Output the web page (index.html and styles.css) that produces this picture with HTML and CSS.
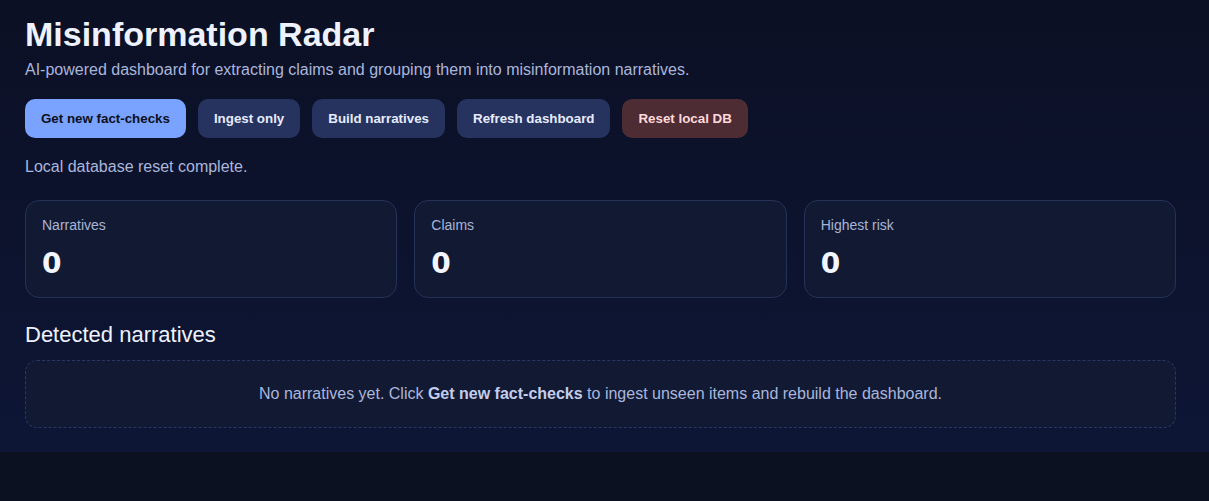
FILE: index.html
```html
<!DOCTYPE html>
<html lang="en">
<head>
<meta charset="utf-8">
<title>Misinformation Radar</title>
<link rel="stylesheet" href="styles.css">
</head>
<body>
<main class="app">
  <h1 class="title">Misinformation Radar</h1>
  <p class="subtitle">AI-powered dashboard for extracting claims and grouping them into misinformation narratives.</p>
  <div class="actions">
    <button class="btn btn-primary">Get new fact-checks</button>
    <button class="btn">Ingest only</button>
    <button class="btn">Build narratives</button>
    <button class="btn">Refresh dashboard</button>
    <button class="btn btn-danger">Reset local DB</button>
  </div>
  <p class="status">Local database reset complete.</p>
  <section class="stats">
    <div class="card">
      <div class="card-label">Narratives</div>
      <div class="card-value">0</div>
    </div>
    <div class="card">
      <div class="card-label">Claims</div>
      <div class="card-value">0</div>
    </div>
    <div class="card">
      <div class="card-label">Highest risk</div>
      <div class="card-value">0</div>
    </div>
  </section>
  <h2 class="section-title">Detected narratives</h2>
  <div class="empty">No narratives yet. Click <strong>Get new fact-checks</strong> to ingest unseen items and rebuild the dashboard.</div>
</main>
</body>
</html>
```
FILE: styles.css
```css
html, body {
  margin: 0;
  padding: 0;
}
body {
  background: #0b1120;
  font-family: "Liberation Sans", Arial, sans-serif;
  color: #e6ecff;
}
.app {
  background: linear-gradient(180deg, #0b1024 0%, #0e1636 100%);
  padding: 15px 33px 24px 25px;
}
.title {
  margin: 0;
  font-size: 34px;
  font-weight: 700;
  color: #eef2ff;
  line-height: 38px;
}
.subtitle {
  margin: 8px 0 0;
  font-size: 16px;
  line-height: 18px;
  color: #aab6dc;
}
.actions {
  display: flex;
  gap: 12px;
  margin-top: 20px;
}
.btn {
  font-family: "Liberation Sans", Arial, sans-serif;
  font-size: 13.333px;
  font-weight: 700;
  line-height: 15px;
  padding: 12px 16px;
  border: 0;
  border-radius: 10px;
  background: #26335e;
  color: #e6ecff;
}
.btn-primary {
  background: #7aa2ff;
  color: #0b1020;
}
.btn-danger {
  background: #4d2c34;
  color: #ffd9d9;
}
.status {
  margin: 20px 0 0;
  font-size: 16px;
  line-height: 18px;
  color: #aab6dc;
}
.stats {
  display: grid;
  grid-template-columns: repeat(3, 1fr);
  gap: 17px;
  margin-top: 24px;
}
.card {
  background: #121a33;
  border: 1px solid #253157;
  border-radius: 14px;
  padding: 16px;
}
.card-label {
  font-size: 14px;
  line-height: 16px;
  color: #a9b4d6;
}
.card-value {
  margin-top: 14px;
  font-family: "DejaVu Sans", Verdana, sans-serif;
  font-size: 28px;
  font-weight: 700;
  line-height: 34px;
  color: #f3f6ff;
}
.section-title {
  margin: 24px 0 0;
  font-size: 22px;
  font-weight: 400;
  line-height: 25px;
  color: #eef2ff;
}
.empty {
  margin-top: 13px;
  background: #121a33;
  border: 1px dashed #2a3766;
  border-radius: 12px;
  padding: 24px;
  text-align: center;
  font-size: 16px;
  line-height: 18px;
  color: #aab6dc;
}
.empty strong {
  color: #c3cdec;
}
```
